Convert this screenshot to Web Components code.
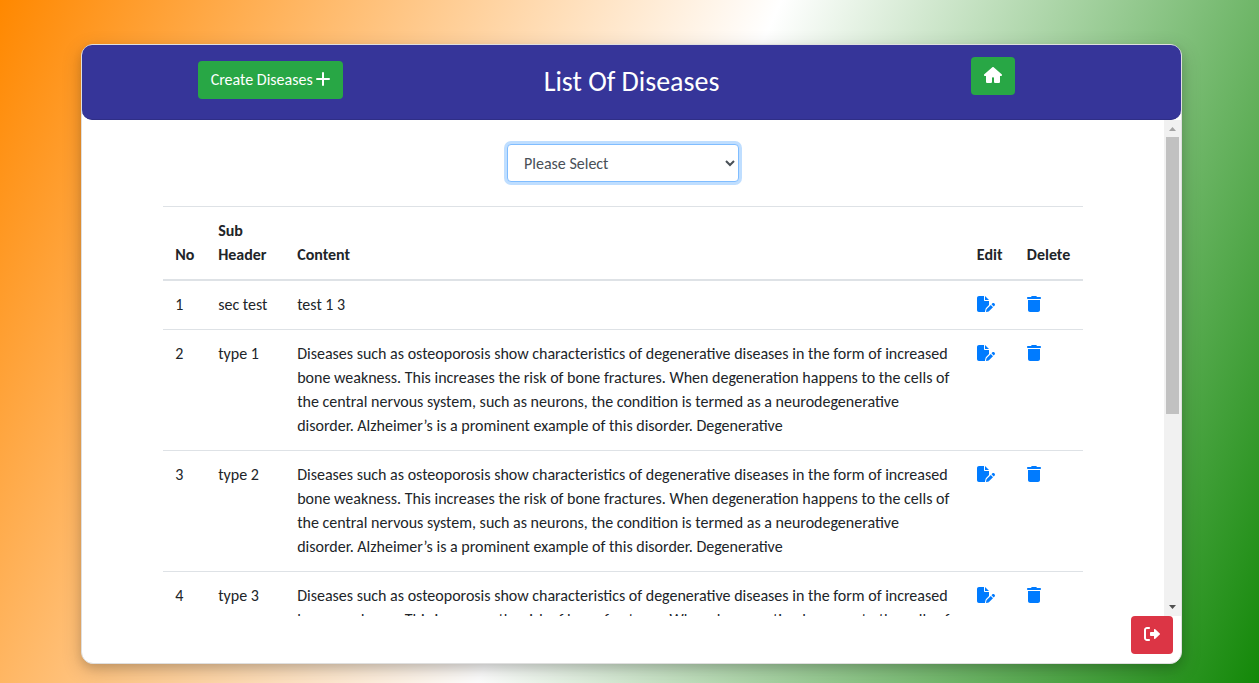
<!DOCTYPE html>
<html lang="en">
<head>
<meta charset="utf-8">
<title>List Of Diseases</title>
<style>
  * { box-sizing: border-box; }
  html { height: 100%; }
  body {
    margin: 0;
    min-height: 100%;
    display: flex;
    padding: 44px 77px 19px 81px;
    background: linear-gradient(114deg, #ff8800, #fff 50%, #138808);
    font: 16px/24px Carlito, Calibri, Lato, sans-serif;
    color: #212529;
  }
</style>
</head>
<body>
<disease-page></disease-page>

<script>
const icons = {
  plus: ['0 0 14 16', '<path d="M6 2a1 1 0 0 1 2 0v5h5a1 1 0 0 1 0 2H8v5a1 1 0 0 1-2 0V9H1a1 1 0 0 1 0-2h5z"/>'],
  home: ['0 0 576 512', '<path d="M575.800 255.500c0 18-15 32.100-32 32.100h-32l.7 160.200c0 2.700-.2 5.400-.5 8.100V472c0 22.100-17.900 40-40 40H360c-22.100 0-40-17.900-40-40V360c0-17.700-14.300-32-32-32s-32 14.300-32 32v112c0 22.100-17.900 40-40 40H104c-22.100 0-40-17.900-40-40V287.600H32c-18 0-32-14-32-32.100 0-9 3-17 10-24L266.400 8c7-7 15-8 22-8s15 2 21 7l255.400 224.500c8 7 12 15 11 24z"/>'],
  edit: ['0 0 576 512', '<path d="M0 64C0 28.700 28.700 0 64 0h160v128c0 17.700 14.300 32 32 32h128v125.700l-86.800 86.800c-10.300 10.300-17.500 23.100-21 37.200l-18.700 74.900c-2.300 9.200-1.800 18.800 1.300 27.500H64c-35.300 0-64-28.700-64-64zm384 64H256V0zM549.800 235.700l14.400 14.400c15.600 15.600 15.600 40.900 0 56.600l-29.400 29.400-71-71 29.400-29.400c15.600-15.600 40.900-15.600 56.600 0zM311.900 417l129.200-129.200 71 71L382.900 487.900c-4.100 4.100-9.200 7-14.900 8.400l-60.100 15c-5.500 1.400-11.200-.2-15.200-4.200s-5.600-9.700-4.200-15.200l15-60.100c1.400-5.600 4.300-10.800 8.400-14.900z"/>'],
  trash: ['0 0 448 512', '<path d="M135.200 17.700C140.600 6.800 151.700 0 163.800 0h120.400c12.100 0 23.200 6.800 28.600 17.700L320 32h96c17.700 0 32 14.300 32 32s-14.300 32-32 32H32C14.300 96 0 81.700 0 64s14.300-32 32-32h96zM32 128h384v320c0 35.300-28.700 64-64 64H96c-35.300 0-64-28.700-64-64z"/>'],
  logout: ['0 0 512 512', '<path d="M160 96c17.700 0 32-14.300 32-32s-14.300-32-32-32H96C43 32 0 75 0 128v256c0 53 43 96 96 96h64c17.700 0 32-14.300 32-32s-14.300-32-32-32H96c-17.700 0-32-14.300-32-32V128c0-17.700 14.300-32 32-32zM504.500 273.400c4.800-4.500 7.500-10.800 7.500-17.400s-2.700-12.900-7.500-17.400l-144-136c-7-6.600-17.200-8.400-26-4.600S320 110.400 320 120v72h-96c-17.700 0-32 14.300-32 32v64c0 17.700 14.300 32 32 32h96v72c0 9.600 5.700 18.200 14.500 22s19 2 26-4.600z"/>']
};

class UiIcon extends HTMLElement {
  connectedCallback() {
    const [box, path] = icons[this.getAttribute('name')];
    this.attachShadow({ mode: 'open' }).innerHTML = `
      <style>
        :host { display: inline-block; height: 16px; line-height: 0; vertical-align: -2px; }
        svg { height: 100%; width: auto; fill: currentColor; display: block; }
      </style>
      <svg viewBox="${box}" aria-hidden="true">${path}</svg>`;
  }
}
customElements.define('ui-icon', UiIcon);

class UiButton extends HTMLElement {
  connectedCallback() {
    this.attachShadow({ mode: 'open' }).innerHTML = `
      <style>
        :host { display: inline-block; --fill: #28a745; }
        :host([variant="danger"]) { --fill: #dc3545; }
        button {
          display: block; height: 38px; padding: 0 13px; border: 0; border-radius: 4px;
          background: var(--fill); color: #fff; font: inherit; cursor: pointer; white-space: nowrap;
        }
      </style>
      <button type="button" aria-label="${this.getAttribute('label')}"><slot></slot></button>`;
  }
}
customElements.define('ui-button', UiButton);

class PageHeader extends HTMLElement {
  connectedCallback() {
    this.attachShadow({ mode: 'open' }).innerHTML = `
      <style>
        :host {
          box-sizing: border-box;
          display: grid; grid-template-columns: repeat(3, 1fr); justify-items: center;
          padding: 12px 8px 0; height: 75px; border-radius: 10px;
          border-bottom: 1px solid #2f2e86;
          background: #363599; color: #fff;
        }
        .create { margin-top: 4px; }
        h1 { margin: 8px 0 0; font-size: 28px; line-height: 34px; font-weight: 400; }
      </style>
      <ui-button class="create" label="Create Diseases">Create Diseases <ui-icon name="plus"></ui-icon></ui-button>
      <h1>List Of Diseases</h1>
      <ui-button label="Home"><ui-icon name="home"></ui-icon></ui-button>`;
  }
}
customElements.define('page-header', PageHeader);

class DiseaseSelect extends HTMLElement {
  connectedCallback() {
    this.attachShadow({ mode: 'open' }).innerHTML = `
      <style>
        :host { display: block; width: 232px; }
        select {
          display: block; width: 100%; height: 38px; padding: 6px 12px; border: 1px solid #80bdff;
          border-radius: 4px; outline: 0; box-shadow: 0 0 0 3px #bfdeff;
          background: #fff; color: #495057; font: inherit;
        }
      </style>
      <select aria-label="Disease"><option>Please Select</option></select>`;
  }
}
customElements.define('disease-select', DiseaseSelect);

class DiseaseTable extends HTMLElement {
  connectedCallback() {
    const text = 'Diseases such as osteoporosis show characteristics of degenerative diseases in the form of increased<br>bone weakness. This increases the risk of bone fractures. When degeneration happens to the cells of<br>the central nervous system, such as neurons, the condition is termed as a neurodegenerative<br>disorder. Alzheimer’s is a prominent example of this disorder. Degenerative';
    const rows = [['sec test', 'test 1 3'], ['type 1', text], ['type 2', text], ['type 3', text]];
    this.attachShadow({ mode: 'open' }).innerHTML = `
      <style>
        :host { display: block; width: 85%; }
        table { width: 100%; border-collapse: collapse; table-layout: fixed; }
        th, td { padding: 12px; border-top: 1px solid #dee2e6; text-align: left; vertical-align: top; }
        th { vertical-align: bottom; border-bottom: 2px solid #dee2e6; font-weight: 700; }
        td:nth-child(3) { white-space: nowrap; }
        .no { width: 43px; } .sub { width: 79px; } .edit { width: 50px; } .delete { width: 68px; }
        a { color: #007bff; }
      </style>
      <table>
        <colgroup><col class="no"><col class="sub"><col><col class="edit"><col class="delete"></colgroup>
        <thead><tr><th>No</th><th>Sub Header</th><th>Content</th><th>Edit</th><th>Delete</th></tr></thead>
        <tbody>${rows.map(([sub, content], i) => `
          <tr><td>${i + 1}</td><td>${sub}</td><td>${content}</td>
          <td><a href="#edit" aria-label="Edit"><ui-icon name="edit"></ui-icon></a></td>
          <td><a href="#delete" aria-label="Delete"><ui-icon name="trash"></ui-icon></a></td></tr>`).join('')}
        </tbody>
      </table>`;
  }
}
customElements.define('disease-table', DiseaseTable);

class ScrollPane extends HTMLElement {
  connectedCallback() {
    this.attachShadow({ mode: 'open' }).innerHTML = `
      <style>
        :host { display: grid; grid-template-columns: 1fr 17px; grid-template-rows: minmax(0, 1fr); min-height: 0; }
        .view { overflow-y: auto; scrollbar-width: none; min-height: 0; }
        .rail { display: flex; flex-direction: column; align-items: center; background: #f1f1f1; }
        .rail svg { width: 17px; height: 17px; flex: none; }
        .track { flex: 1; width: 13px; }
        .thumb { height: 60%; background: #c1c1c1; }
      </style>
      <div class="view"><slot></slot></div>
      <div class="rail" aria-hidden="true">
        <svg viewBox="0 0 17 17"><path d="M5 11h7L8.500 7z" fill="#a3a3a3"/></svg>
        <div class="track"><div class="thumb"></div></div>
        <svg viewBox="0 0 17 17"><path d="M5 6h7L8.500 10z" fill="#505050"/></svg>
      </div>`;
  }
}
customElements.define('scroll-pane', ScrollPane);

class DiseasePage extends HTMLElement {
  connectedCallback() {
    this.attachShadow({ mode: 'open' }).innerHTML = `
      <style>
        :host {
          flex: 1; min-width: 0; display: flex; flex-direction: column;
          background: #fff; border: 1px solid #dfdfdf; border-radius: 12px;
          box-shadow: 0 4px 8px rgba(0, 0, 0, .1), 0 6px 20px rgba(0, 0, 0, .19);
        }
        scroll-pane { flex: 1 1 0; }
        .content { display: flex; flex-direction: column; align-items: center; gap: 24px; padding-top: 24px; }
        footer { display: flex; justify-content: flex-end; padding: 0 8px 9px; }
      </style>
      <page-header></page-header>
      <scroll-pane>
        <div class="content"><disease-select></disease-select><disease-table></disease-table></div>
      </scroll-pane>
      <footer><ui-button variant="danger" label="Log out"><ui-icon name="logout"></ui-icon></ui-button></footer>`;
  }
}
customElements.define('disease-page', DiseasePage);
</script>
</body>
</html>
